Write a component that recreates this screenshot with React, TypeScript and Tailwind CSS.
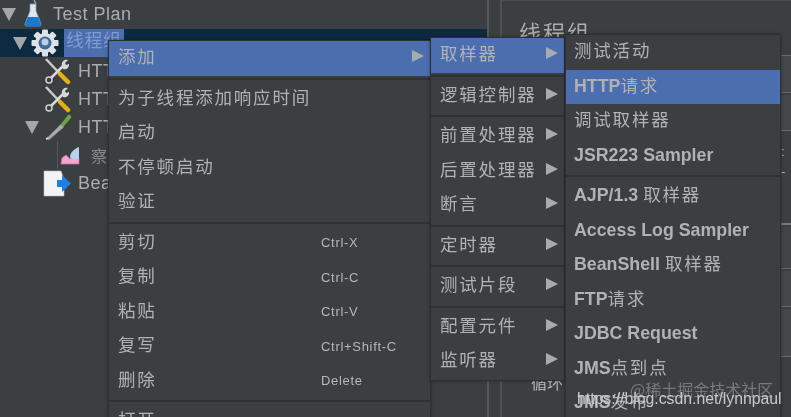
import React from "react";

const cjk = "font-['Noto_Sans_CJK_SC','Liberation_Sans',sans-serif]";

function Caret() {
  return (
    <svg width="14" height="13" viewBox="0 0 14 13">
      <path d="M0 0h14L7 13z" fill="#a4a7a9" />
    </svg>
  );
}

function Flask() {
  return (
    <svg width="18" height="28" viewBox="0 0 18 28">
      <path d="M10 0l2 4" stroke="#9aa0a6" strokeWidth="1.500" />
      <path d="M6 4h6v7l5 13c.4 1.300-.4 2-1.500 2h-13C1.400 26 .6 25.300 1 24l5-13z" fill="#dfe7ee" stroke="#7d9cb8" strokeWidth="0.8" />
      <path d="M4 17h10l3 7c.4 1.300-.4 2-1.500 2h-13C1.400 26 .6 25.300 1 24z" fill="#1b78d0" />
    </svg>
  );
}

function Gear() {
  const teeth = [0, 45, 90, 135, 180, 225, 270, 315];
  return (
    <svg width="28" height="28" viewBox="0 0 28 28">
      {teeth.map((a) => (
        <rect key={a} x="11" y="0.500" width="6" height="6" rx="1" fill="#dfe2e5" transform={`rotate(${a} 14 14)`} />
      ))}
      <circle cx="14" cy="14" r="10" fill="#dfe2e5" />
      <circle cx="14" cy="14" r="6.500" fill="#3f6a9c" />
      <circle cx="14" cy="13" r="3.500" fill="#b9d0e8" />
    </svg>
  );
}

function Tools() {
  return (
    <svg width="27" height="28" viewBox="0 0 27 28">
      <path d="M2 2l15 16" stroke="#c9ccce" strokeWidth="2.500" />
      <path d="M16 17l8 8" stroke="#e6b010" strokeWidth="4.500" strokeLinecap="round" />
      <path d="M20 8L6 22" stroke="#d8dadc" strokeWidth="2.500" />
      <circle cx="5" cy="23" r="3" fill="#3c3f41" stroke="#cfd1d3" strokeWidth="1.500" />
      <path d="M18 9c-1-4 2-7 6-6l-3 3 1 2 3-1c.5 4-3 6-6 5z" fill="#d4d6d8" />
    </svg>
  );
}

function Pipette() {
  return (
    <svg width="29" height="28" viewBox="0 0 29 28">
      <path d="M2 26L17 11l3 3L5 27z" fill="#a8abae" stroke="#6f7275" strokeWidth="0.8" />
      <path d="M17 11l7-9c2-1 4 1 3 3l-8 9z" fill="#6aa63c" />
      <path d="M2 26l2-1" stroke="#e0e0e0" strokeWidth="1.500" />
    </svg>
  );
}

function Graph() {
  return (
    <svg width="20" height="19" viewBox="0 0 20 19">
      <path d="M1 18l1-6 4-3 4 4 4-3 5 3v5z" fill="#f0a8d0" stroke="#d868a8" strokeWidth="0.8" />
      <path d="M10 11c0-4 4-8 9-10v12c-3 1-8 1-9-2z" fill="#b6d2ee" />
    </svg>
  );
}

function Bean() {
  return (
    <svg width="29" height="27" viewBox="0 0 29 27">
      <path d="M1 1h17l3 8v17H1z" fill="#f2f4f6" stroke="#b8babc" strokeWidth="0.6" />
      <path d="M14 10h5V5l9 8.500-9 8.500v-5h-5z" fill="#1f7fe0" />
    </svg>
  );
}

function TreeRow({
  indent,
  caret,
  icon,
  label,
  selected,
  iconBox,
  labelClass,
  rowClass = "h-[28px]",
}: {
  indent: string;
  caret?: boolean;
  icon: React.ReactNode;
  label: string;
  selected?: boolean;
  iconBox: string;
  labelClass: string;
  rowClass?: string;
}) {
  return (
    <div className={`flex items-center ${rowClass} ${selected ? "bg-[#0c2a40]" : ""}`}>
      <div className={`flex h-full shrink-0 items-center justify-end pr-[4px] ${indent}`}>{caret && <Caret />}</div>
      <div className={`flex shrink-0 justify-center ${iconBox}`}>{icon}</div>
      <span
        className={`flex h-full items-center whitespace-nowrap text-[18px] tracking-[0.500px] font-['Liberation_Sans','Noto_Sans_CJK_SC',sans-serif] ${labelClass} ${
          selected ? "bg-[#4b6eaf] text-[#7f9bd0]" : "text-[#a9adb0]"
        }`}
      >
        {label}
      </span>
    </div>
  );
}

type Row = { t: string; cn?: string; sub?: boolean; key?: string; hl?: boolean; sep?: boolean; bold?: boolean };

const cnClass = `pb-[4px] text-[17.500px] tracking-[1.800px] text-[#b0b2b4] ${cjk}`;

function Menu({ rows, className, pad }: { rows: Row[]; className: string; pad: string }) {
  return (
    <div className={`absolute border border-[#2e3032] bg-[#3c3f41] shadow-[0_0_3px_rgba(0,0,0,0.4)] ${className}`}>
      {rows.map((r, i) =>
        r.sep ? (
          <div key={i} className="my-[2px] h-[2px] bg-[#2f3133]" />
        ) : (
          <div
            key={i}
            className={`flex h-[34.500px] items-center justify-between whitespace-nowrap ${pad} ${
              r.hl ? "bg-[#4b6eaf]" : ""
            }`}
          >
            <span className="flex items-center">
              {r.t && (
                <span
                  className={
                    r.bold
                      ? "whitespace-pre pb-[1px] text-[17.800px] font-bold text-[#b0b2b4] font-['Liberation_Sans',sans-serif]"
                      : cnClass
                  }
                >
                  {r.t}
                </span>
              )}
              {r.cn && <span className={cnClass}>{r.cn}</span>}
            </span>
            {r.key && (
              <span className="absolute left-[212px] text-[13px] tracking-[0.700px] text-[#b4b6b8] font-['Liberation_Sans',sans-serif]">
                {r.key}
              </span>
            )}
            {r.sub && (
              <svg width="12" height="14" viewBox="0 0 12 14" className="mb-[4px]">
                <path d="M0 1l12 6-12 6z" fill="#a9acae" />
              </svg>
            )}
          </div>
        )
      )}
    </div>
  );
}

const m1: Row[] = [
  { t: "添加", sub: true, hl: true },
  { sep: true, t: "" },
  { t: "为子线程添加响应时间" },
  { t: "启动" },
  { t: "不停顿启动" },
  { t: "验证" },
  { sep: true, t: "" },
  { t: "剪切", key: "Ctrl-X" },
  { t: "复制", key: "Ctrl-C" },
  { t: "粘贴", key: "Ctrl-V" },
  { t: "复写", key: "Ctrl+Shift-C" },
  { t: "删除", key: "Delete" },
  { sep: true, t: "" },
  { t: "打开" },
];

const m2: Row[] = [
  { t: "取样器", sub: true, hl: true },
  { sep: true, t: "" },
  { t: "逻辑控制器", sub: true },
  { sep: true, t: "" },
  { t: "前置处理器", sub: true },
  { t: "后置处理器", sub: true },
  { t: "断言", sub: true },
  { sep: true, t: "" },
  { t: "定时器", sub: true },
  { sep: true, t: "" },
  { t: "测试片段", sub: true },
  { sep: true, t: "" },
  { t: "配置元件", sub: true },
  { t: "监听器", sub: true },
];

const m3: Row[] = [
  { t: "测试活动" },
  { t: "HTTP", cn: "请求", hl: true, bold: true },
  { t: "调试取样器" },
  { t: "JSR223 Sampler", bold: true },
  { sep: true, t: "" },
  { t: "AJP/1.3 ", cn: "取样器", bold: true },
  { t: "Access Log Sampler", bold: true },
  { t: "BeanShell ", cn: "取样器", bold: true },
  { t: "FTP", cn: "请求", bold: true },
  { t: "JDBC Request", bold: true },
  { t: "JMS", cn: "点到点", bold: true },
  { t: "JMS", cn: "发布", bold: true },
];

export default function App() {
  return (
    <div className="relative flex h-[417px] w-[791px] overflow-hidden bg-[#3c3f41] blur-[0.5px]">
      <div className="w-[489px] shrink-0 border-r-2 border-[#55585a]">
        <TreeRow rowClass="h-[29px] pb-[1px]" indent="w-[20px]" caret icon={<Flask />} iconBox="w-[26px]" labelClass="ml-[7px]" label="Test Plan" />
        <TreeRow indent="w-[31px]" caret icon={<Gear />} iconBox="w-[28px]" labelClass="ml-[5px] w-[60px] overflow-hidden pl-[2px] pb-[3px]" label="线程组" selected />
        <TreeRow indent="w-[44px]" icon={<Tools />} iconBox="w-[27px]" labelClass="ml-[7px]" label="HTTP" />
        <TreeRow indent="w-[44px]" icon={<Tools />} iconBox="w-[27px]" labelClass="ml-[7px]" label="HTTP" />
        <TreeRow indent="w-[43px]" caret icon={<Pipette />} iconBox="w-[30px]" labelClass="ml-[5px]" label="HTTP" />
        <div className="flex h-[28px] items-center">
          <div className="h-full w-[58px] shrink-0 border-r border-[#55585a]" />
          <div className="ml-[2px] w-[20px] shrink-0"><Graph /></div>
          <span className={`ml-[11px] text-[16px] text-[#85888a] ${cjk}`}>察</span>
        </div>
        <TreeRow indent="w-[43px]" icon={<Bean />} iconBox="w-[29px]" labelClass="ml-[6px]" label="Bean" />
      </div>
      <div className="w-[13px] shrink-0 border-r-2 border-[#505355]" />
      <div className="flex flex-1 flex-col border-t border-[#4a4d4f] pl-[17px] pt-[16px]">
        <div className={`text-[22px] leading-[28px] tracking-[2px] text-[#a9adb0] ${cjk}`}>线程组</div>
        <div className="mt-[10px] ml-[259px] flex flex-col gap-[2px]">
          <div className="h-[38px] border-y border-[#66696b] bg-[#45484a]" />
          <div className="h-[36px] border-b border-[#66696b] bg-[#45484a]" />
          <div className="h-[92px] border-b-2 border-[#76797b]" />
          <div className="h-[42px] border-b border-[#66696b] bg-[#424547]" />
          <div className="h-[36px] border-b border-[#66696b] bg-[#45484a]" />
          <div className="h-[48px] border-b border-[#66696b] bg-[#45484a]" />
        </div>
      </div>

      <span className={`absolute left-[531px] top-[370px] text-[16px] text-[#b4b6b8] ${cjk}`}>循环</span>
      <span className="absolute left-[781px] top-[142px] text-[13px] text-[#b4b6b8] font-['Liberation_Sans',sans-serif]">: -</span>

      <Menu rows={m1} className="left-[108px] top-[40px] w-[323px] pb-[40px]" pad="pl-[9px] pr-[6px]" />
      <Menu rows={m2} className="left-[430px] top-[37px] w-[135px] pb-[1px]" pad="pl-[9px] pr-[6px]" />
      <Menu rows={m3} className="left-[565px] top-[34px] w-[216px] pb-[40px]" pad="pl-[8px] pr-[4px]" />

      <span className={`absolute left-[630px] top-[377px] whitespace-nowrap text-[16px] text-[#77797b] ${cjk}`}>@稀土掘金技术社区</span>
      <span className="absolute left-[577px] top-[387px] whitespace-nowrap text-[15.800px] text-[#c8c8c8] font-['Liberation_Sans',sans-serif]">https://blog.csdn.net/lynnpaul</span>
    </div>
  );
}
